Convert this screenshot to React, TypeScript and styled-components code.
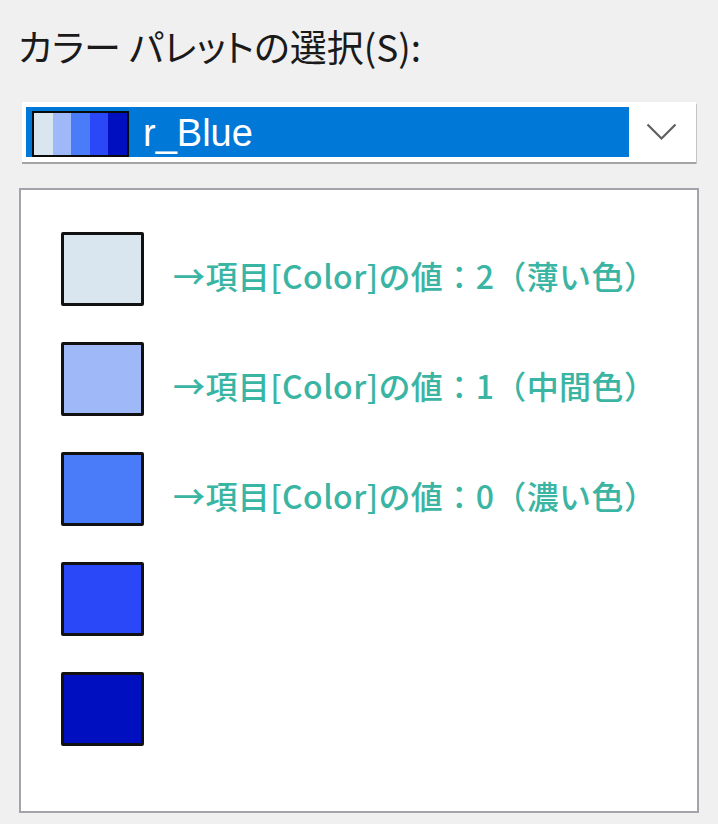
import React from "react";
import styled, { createGlobalStyle } from "styled-components";

const GlobalStyle = createGlobalStyle`
  html, body {
    margin: 0;
    padding: 0;
    background: #f0f0f0;
  }
  body {
    font-family: "Noto Sans CJK JP", "Noto Sans", sans-serif;
  }
`;

const Page = styled.div`
  width: 718px;
  height: 824px;
  display: flex;
  flex-direction: column;
  box-sizing: border-box;
  overflow: hidden;
`;

const Label = styled.div`
  margin: 24px 0 0 18px;
  height: 44px;
  font-size: 37px;
  line-height: 44px;
  color: #1a1a1a;
  white-space: nowrap;
  font-feature-settings: "palt";
`;

const Combo = styled.div`
  margin: 34px 0 0 22px;
  width: 674px;
  height: 60px;
  box-sizing: border-box;
  background: #ffffff;
  box-shadow: 0 2px 0 #a4a4a4, 1px 2px 0 #c4c4c4;
  display: flex;
  align-items: stretch;
  padding: 5px 0 5px 4px;
`;

const Selected = styled.div`
  flex: 0 0 603px;
  background: #0078d7;
  display: flex;
  align-items: center;
  gap: 14px;
  padding-left: 6px;
  box-sizing: border-box;
`;

const Strip = styled.div`
  width: 97px;
  height: 46px;
  margin-top: 4px;
  box-sizing: border-box;
  border: 2px solid #0a0a0a;
  display: grid;
  grid-template-columns: repeat(5, 1fr);
`;

const StripCell = styled.div<{ $c: string }>`
  background: ${(p) => p.$c};
`;

const ComboText = styled.span`
  font-family: "Liberation Sans", Arial, sans-serif;
  font-size: 38px;
  line-height: 1;
  color: #ffffff;
  padding-top: 2px;
`;

const Arrow = styled.div`
  flex: 1;
  display: flex;
  align-items: center;
  justify-content: center;
  padding-right: 2px;
`;

const Panel = styled.div`
  margin: 26px 0 0 19px;
  width: 680px;
  height: 625px;
  box-sizing: border-box;
  background: #ffffff;
  border: 2px solid #a3a4ab;
  padding: 42px 0 0 40px;
  display: flex;
  flex-direction: column;
  gap: 36px;
`;

const Row = styled.div`
  display: flex;
  align-items: center;
  gap: 29px;
  height: 74px;
`;

const Swatch = styled.div<{ $c: string }>`
  width: 83px;
  height: 74px;
  box-sizing: border-box;
  border: 3px solid #111111;
  border-radius: 2px;
  background: ${(p) => p.$c};
  flex: none;
`;

const Note = styled.span`
  font-family: "Noto Sans CJK JP", "Noto Sans", sans-serif;
  font-size: 32px;
  font-weight: 500;
  letter-spacing: 0.4px;
  color: #3bb5a3;
  white-space: nowrap;
  padding-top: 12px;
`;

const colors = ["#dae6ef", "#9fb8f8", "#4a7bf8", "#2a48f8", "#0010c0"];

const notes: Record<number, string> = {
  0: "→項目[Color]の値：2（薄い色）",
  1: "→項目[Color]の値：1（中間色）",
  2: "→項目[Color]の値：0（濃い色）",
};

export default function App() {
  return (
    <>
      <GlobalStyle />
      <Page>
        <Label>カラー パレットの選択(S):</Label>
        <Combo>
          <Selected>
            <Strip>
              {colors.map((c) => (
                <StripCell key={c} $c={c} />
              ))}
            </Strip>
            <ComboText>r_Blue</ComboText>
          </Selected>
          <Arrow>
            <svg width="31" height="18" viewBox="0 0 31 18">
              <polyline
                points="1.5,1.5 15.5,15.5 29.5,1.5"
                fill="none"
                stroke="#5f5f5f"
                strokeWidth="2.2"
              />
            </svg>
          </Arrow>
        </Combo>
        <Panel>
          {colors.map((c, i) => (
            <Row key={c}>
              <Swatch $c={c} />
              {notes[i] && <Note>{notes[i]}</Note>}
            </Row>
          ))}
        </Panel>
      </Page>
    </>
  );
}
